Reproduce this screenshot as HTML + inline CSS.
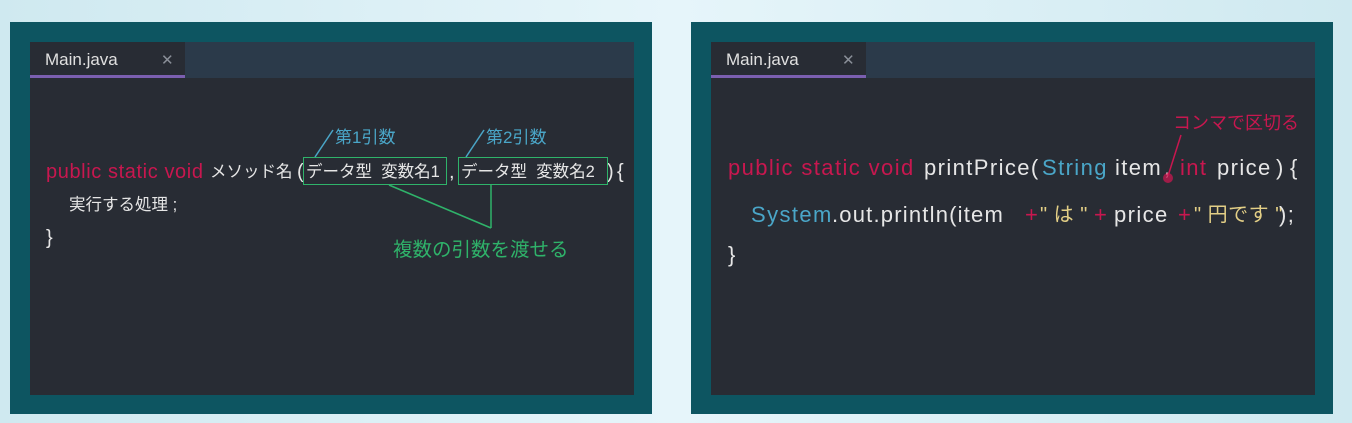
<!DOCTYPE html>
<html><head><meta charset="utf-8"><style>
*{margin:0;padding:0;box-sizing:border-box}
body{width:1352px;height:423px;overflow:hidden;background:linear-gradient(90deg,#cfe9f0 0%,#e6f5fa 50%,#cfe9f0 100%);position:relative;font-family:"Liberation Sans","Noto Sans CJK JP",sans-serif}
.outer{position:absolute;top:22px;width:642px;height:392px;background:#0d5561}
.inner{position:absolute;left:20px;top:20px;width:604px;height:353px;background:#282c34}
.bar{position:absolute;left:0;top:0;width:100%;height:36px;background:#2b3a4a}
.tab{position:absolute;left:0;top:0;width:155px;height:36px;background:#282c34;border-bottom:3px solid #7b5fb0;color:#e0e0e0;font-size:17px;padding:8px 0 0 15px}
.tab span{position:absolute;left:131px;top:9px;color:#8a8f98;font-size:15px}
.t{position:absolute;white-space:nowrap;font-size:20px;line-height:24px;color:#e6e6e6}
.j{font-size:16.5px}
.r{font-size:22px;line-height:26px;letter-spacing:1.4px}
.k{color:#c8174f}.b{color:#4aa6c8}.y{color:#e3cf86}
.box{position:absolute;border:1.5px solid #2fb36a}
</style></head><body>
<div class="outer" style="left:10px"><div class="inner">
<div class="bar"></div><div class="tab">Main.java<span>✕</span></div>
<div class="t b j" style="left:305px;top:84px;font-size:17px">第1引数</div>
<div class="t b j" style="left:456px;top:84px;font-size:17px">第2引数</div>
<div class="t k" style="left:16px;top:118px;letter-spacing:.6px">public static void</div>
<div class="t j" style="left:180px;top:118px">メソッド名</div>
<div class="t" style="left:267px;top:118px">(</div>
<div class="t j" style="left:276px;top:118px">データ型&nbsp; 変数名1</div>
<div class="t" style="left:419px;top:118px">,</div>
<div class="t j" style="left:431px;top:118px">データ型&nbsp; 変数名2</div>
<div class="t" style="left:577px;top:118px">)</div>
<div class="t" style="left:587px;top:118px">{</div>
<div class="box" style="left:273px;top:115px;width:144px;height:28px"></div>
<div class="box" style="left:428px;top:115px;width:150px;height:28px"></div>
<div class="t j" style="left:39px;top:151px">実行する処理 ;</div>
<div class="t" style="left:16px;top:184px">}</div>
<div class="t" style="left:363px;top:196px;color:#2fb36a;font-size:19.5px">複数の引数を渡せる</div>
<svg style="position:absolute;left:0;top:0" width="604" height="353">
<g stroke="#4aa6c8" stroke-width="1.5" fill="none"><line x1="285" y1="115" x2="303" y2="88"/><line x1="436" y1="115" x2="454" y2="88"/></g>
<g stroke="#2fb36a" stroke-width="1.5" fill="none"><line x1="359" y1="143" x2="461" y2="186"/><line x1="461" y1="143" x2="461" y2="186"/></g>
</svg>
</div></div>
<div class="outer" style="left:691px"><div class="inner">
<div class="bar"></div><div class="tab">Main.java<span>✕</span></div>
<div class="t k" style="left:462px;top:69px;font-size:18px">コンマで区切る</div>
<div class="t r k" style="left:17px;top:113px">public static void</div>
<div class="t r" style="left:213px;top:113px">printPrice(</div>
<div class="t r b" style="left:331px;top:113px">String</div>
<div class="t r" style="left:404px;top:113px">item</div>
<div class="t r" style="left:453px;top:113px">,</div>
<div class="t r k" style="left:469px;top:113px">int</div>
<div class="t r" style="left:506px;top:113px">price</div>
<div class="t r" style="left:565px;top:113px">)</div>
<div class="t r" style="left:579px;top:113px">{</div>
<div class="t r b" style="left:40px;top:160px">System</div>
<div class="t r" style="left:121px;top:160px;letter-spacing:1.2px">.out.println(item</div>
<div class="t r k" style="left:314px;top:160px">+</div>
<div class="t r y" style="left:329px;top:160px;font-size:20px;letter-spacing:.5px">" は "</div>
<div class="t r k" style="left:383px;top:160px">+</div>
<div class="t r" style="left:403px;top:160px">price</div>
<div class="t r k" style="left:467px;top:160px">+</div>
<div class="t r y" style="left:483px;top:160px;font-size:20px;letter-spacing:.5px">" 円です "</div>
<div class="t r" style="left:568px;top:160px">);</div>
<div class="t r" style="left:17px;top:200px">}</div>
<svg style="position:absolute;left:0;top:0" width="604" height="353">
<line x1="470" y1="93" x2="457" y2="134" stroke="#c8174f" stroke-width="1.5"/>
<circle cx="457" cy="136" r="5" fill="#c8174f" opacity=".75"/>
</svg>
</div></div>
</body></html>
